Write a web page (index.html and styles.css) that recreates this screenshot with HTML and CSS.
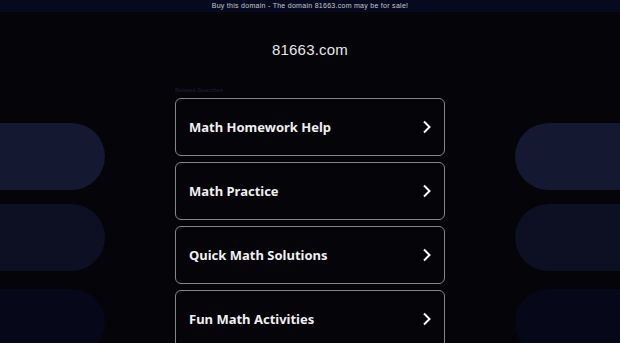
FILE: index.html
```html
<!DOCTYPE html>
<html>

<head>
    <title>81663.com</title>
    <link rel="stylesheet" href="styles.css">
</head>

<body>
    <div class="topbar">Buy this domain - The domain 81663.com may be for sale!</div>
    <div class="page">
        <div class="side">
            <div class="pill pill-1"></div>
            <div class="pill pill-2"></div>
            <div class="pill pill-3"></div>
        </div>
        <div class="center">
            <h1 class="domain">81663.com</h1>
            <div class="related">Related Searches</div>
            <a class="card" href="#"><span>Math Homework Help</span>
                <svg class="chevron" width="10" height="14" viewBox="0 0 10 14"><path d="M2 1.5 L7.5 7 L2 12.5" /></svg></a>
            <a class="card" href="#"><span>Math Practice</span>
                <svg class="chevron" width="10" height="14" viewBox="0 0 10 14"><path d="M2 1.5 L7.5 7 L2 12.5" /></svg></a>
            <a class="card" href="#"><span>Quick Math Solutions</span>
                <svg class="chevron" width="10" height="14" viewBox="0 0 10 14"><path d="M2 1.5 L7.5 7 L2 12.5" /></svg></a>
            <a class="card" href="#"><span>Fun Math Activities</span>
                <svg class="chevron" width="10" height="14" viewBox="0 0 10 14"><path d="M2 1.5 L7.5 7 L2 12.5" /></svg></a>
        </div>
        <div class="side right">
            <div class="pill pill-1"></div>
            <div class="pill pill-2"></div>
            <div class="pill pill-3"></div>
        </div>
    </div>
</body>

</html>
```

FILE: styles.css
```css
body {
    background-color: #040409;
    margin: 0;
    font-family: "Liberation Sans", Arial, sans-serif;
    overflow: hidden;
    height: 343px;
}

.topbar {
    height: 12px;
    line-height: 12px;
    background-color: #070a1e;
    color: #c4c6d2;
    font-size: 7px;
    letter-spacing: 0.28px;
    text-align: center;
}

.page {
    display: flex;
    justify-content: space-between;
}

.side {
    width: 105px;
    padding-top: 111px;
    display: flex;
    flex-direction: column;
    gap: 14px;
}

.pill {
    height: 67px;
    border-radius: 0 34px 34px 0;
    flex-shrink: 0;
}

.side.right .pill {
    border-radius: 34px 0 0 34px;
}

.pill-1 {
    background-color: #141830;
}

.pill-2 {
    background-color: #0d0f22;
}

.pill-3 {
    background-color: #060718;
    margin-top: 4px;
}

.center {
    width: 270px;
    display: flex;
    flex-direction: column;
}

.domain {
    margin: 29px 0 0 0;
    font-size: 15px;
    font-weight: normal;
    line-height: 18px;
    color: #e6e6ea;
    text-align: center;
    letter-spacing: 0.2px;
}

.related {
    margin-top: 27px;
    font-size: 6px;
    line-height: 8px;
    color: #1d2038;
}

.card {
    display: flex;
    align-items: center;
    justify-content: space-between;
    height: 58px;
    box-sizing: border-box;
    margin-top: 6px;
    padding: 0 12px 0 13px;
    border: 1.5px solid #85858a;
    border-radius: 6px;
    color: #f0f0f0;
    text-decoration: none;
    font-family: "Noto Sans", sans-serif;
    font-weight: bold;
    font-size: 13px;
    letter-spacing: 0;
}

.related + .card {
    margin-top: 4px;
}

.chevron path {
    fill: none;
    stroke: #ffffff;
    stroke-width: 2;
}
```
